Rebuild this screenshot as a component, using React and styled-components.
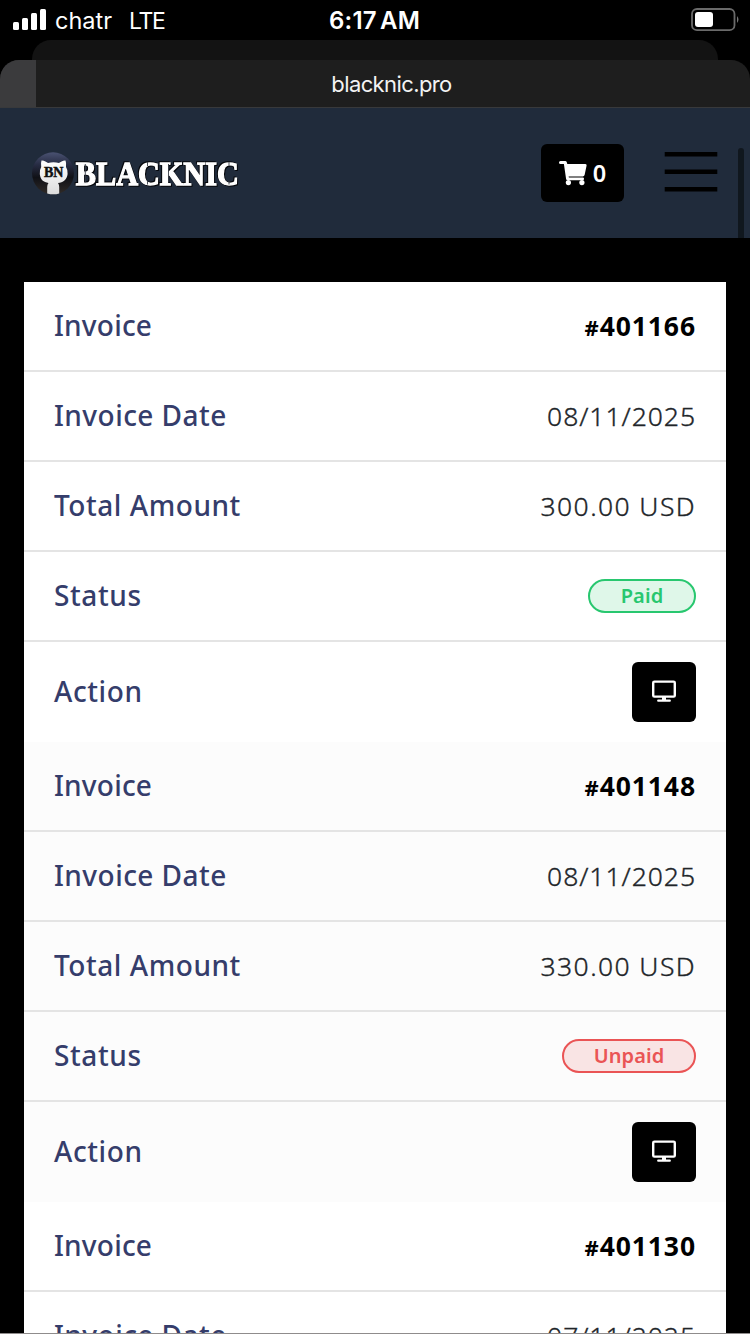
import React from "react";
import styled, { createGlobalStyle } from "styled-components";

const GlobalStyle = createGlobalStyle`
  html, body { margin: 0; background: #000; }
  * { box-sizing: border-box; }
`;

const Screen = styled.div`
  position: relative;
  width: 750px;
  height: 1334px;
  overflow: hidden;
  display: flex;
  flex-direction: column;
  background: #000;
  font-family: "Noto Sans", sans-serif;
`;

const StatusBar = styled.div`
  flex: none;
  height: 40px;
  display: grid;
  grid-template-columns: 1fr auto 1fr;
  grid-template-rows: 40px;
  align-items: center;
  padding: 0 10px 0 13px;
  color: #fff;
  font-family: Inter, sans-serif;
  line-height: 42px;
`;

const Carrier = styled.div`
  display: flex;
  align-items: center;
  font-size: 23.5px;
  padding-top: 2px;
`;

const Network = styled.span`
  margin-left: 17px;
  font-size: 23px;
  letter-spacing: -1.4px;
`;

const Signal = styled.svg`
  margin: -2px 8px 0 0;
`;

const Clock = styled.div`
  padding: 1px 4px 0 0;
  font-size: 24px;
  font-weight: 600;
  letter-spacing: 0.2px;
  word-spacing: -3px;
`;

const Battery = styled.svg`
  justify-self: end;
`;

const BackTab = styled.div`
  flex: none;
  height: 20px;
  margin: 0 32px;
  border-radius: 19px 19px 0 0;
  background: #131313;
`;

const AddressBar = styled.div`
  flex: none;
  height: 48px;
  display: flex;
  border-radius: 19px 19px 0 0;
  overflow: hidden;
  background: #1e1e1e;
  border-bottom: 1px solid #38393b;
`;

const TabEdge = styled.div`
  width: 36px;
  background: #3b3b3d;
`;

const Address = styled.div`
  flex: 1;
  text-align: center;
  color: #f3f3f3;
  font: 22px/48px Inter, sans-serif;
  letter-spacing: -0.6px;
  padding-right: 3px;
`;

const Header = styled.header`
  position: relative;
  flex: none;
  height: 130px;
  display: flex;
  align-items: center;
  padding: 0 32px;
  background: #202b3b;
`;

const Logo = styled.svg`
  margin-right: auto;
`;

const Wordmark = styled.g`
  font: 700 34.5px "Liberation Serif", serif;
  fill: #fff;
  stroke: #fff;
  stroke-width: 1.3px;
  filter: drop-shadow(1px 1px 0 #06080c) drop-shadow(-1px -1px 0 #06080c);
`;

const CartButton = styled.button`
  width: 83px;
  height: 58px;
  display: flex;
  align-items: center;
  justify-content: center;
  gap: 6px;
  border: 0;
  border-radius: 6px;
  padding: 0;
  background: #000;
  color: #fff;
  font: 600 23.5px/40px "Noto Sans", sans-serif;
`;

const MenuIcon = styled.svg`
  margin: 0 0 2px 40px;
`;

const ScrollThumb = styled.div`
  position: absolute;
  right: 6px;
  top: 40px;
  bottom: 0;
  width: 6px;
  border-radius: 3px 3px 0 0;
  background: #10171e;
`;

const InvoiceList = styled.main`
  flex: none;
  margin: 44px 24px 0;
`;

const InvoiceCard = styled.section`
  background: ${(p) => (p.$striped ? "#fcfcfc" : "#fff")};
`;

const Row = styled.div`
  height: ${(p) => (p.$last ? "100px" : "90px")};
  display: flex;
  align-items: center;
  justify-content: space-between;
  padding: 0 30px;
  border-bottom: ${(p) => (p.$last ? "0" : "2px solid #e4e4e4")};
`;

const Label = styled.span`
  color: #353d6b;
  font-size: 28px;
  font-weight: 500;
  line-height: 40px;
  padding-bottom: 2px;
  letter-spacing: ${(p) => p.$spacing || "0.5px"};
`;

const Value = styled.span`
  color: #212529;
  font-size: 26.5px;
  font-weight: 300;
  line-height: 40px;
  letter-spacing: ${(p) => p.$spacing || "0.95px"};
  -webkit-text-stroke: 0.35px currentColor;
`;

const Number = styled(Value)`
  color: #000;
  font-weight: 700;
  letter-spacing: 0.9px;
  -webkit-text-stroke: 0;
`;

const Hash = styled.span`
  font-size: 22px;
`;

const Badge = styled.span`
  width: ${(p) => (p.$paid ? "108px" : "134px")};
  height: 34px;
  border: 2px solid ${(p) => (p.$paid ? "#28c76f" : "#ea5455")};
  border-radius: 17px;
  background: ${(p) => (p.$paid ? "#dff7e9" : "#f9e4e4")};
  color: ${(p) => (p.$paid ? "#28c76f" : "#ea5455")};
  font-size: 20px;
  font-weight: 600;
  line-height: 29px;
  letter-spacing: 0.1px;
  text-align: center;
`;

const ViewButton = styled.button`
  width: 64px;
  height: 60px;
  display: grid;
  place-items: center;
  padding: 0 0 2px;
  border: 0;
  border-radius: 6px;
  background: #000;
`;

const BottomLine = styled.div`
  position: absolute;
  left: 0;
  right: 0;
  bottom: 0;
  height: 1px;
  background: #8f8c8c;
`;

const MonitorIcon = () => (
  <svg width="24" height="22" viewBox="0 0 24 22" fill="none" stroke="#fff">
    <rect x="1.2" y="1.6" width="21.6" height="15" rx="1.2" strokeWidth="2.4" />
    <path d="M12 16.5v4" strokeWidth="4" />
    <path d="M6.2 20.7h11.6" strokeWidth="2.2" strokeLinecap="round" />
  </svg>
);

const CartIcon = () => (
  <svg width="28" height="25" viewBox="0 0 28 25" fill="#fff">
    <path d="M1.5 0H6.2Q7.4 0 7.8 1.2L8.3 3H26.4Q27.9 3 27.6 4.5L25.6 14Q25.2 15.4 23.8 15.4H9.6L9.9 16.5H24.3Q25.2 17 25 18Q24.8 19.2 23.8 19.3H8.6Q7.4 19.2 7.1 18L4.9 3H1.5A1.5 1.5 0 0 1 1.5 0Z" />
    <circle cx="9.4" cy="21.6" r="2.6" />
    <circle cx="22.9" cy="21.6" r="2.6" />
  </svg>
);

const BrandLogo = () => (
  <Logo width="212" height="46" viewBox="0 0 212 46">
    <defs>
      <linearGradient id="disc" x1="0" y1="0" x2="0" y2="1">
        <stop offset="0" stopColor="#4a5272" />
        <stop offset="0.3" stopColor="#262b42" />
        <stop offset="0.6" stopColor="#101116" />
        <stop offset="1" stopColor="#302b28" />
      </linearGradient>
      <linearGradient id="cat" x1="0" y1="0" x2="0" y2="1">
        <stop offset="0" stopColor="#fff" />
        <stop offset="1" stopColor="#dcdcdc" />
      </linearGradient>
    </defs>
    <circle cx="21" cy="23.3" r="21" fill="url(#disc)" />
    <path
      d="M9.5 10.5 C12 10.2 14.5 12 16 13 Q21.5 11.7 27 13 C28.5 12 31 10.2 33.5 10.5 Q34.5 13 34 17 Q36 20 35.6 24 C35 30 31 32.3 26 33 Q27.2 34.5 27.2 37 V43.5 Q21.5 45.2 15.2 43.5 V37 Q15.2 34.5 16.5 33 C11.5 32 8.4 30 7.8 24 Q7.4 20 9.2 17 Q8.6 13 9.5 10.5Z"
      fill="url(#cat)"
    />
    <text x="12" y="27.4" textLength="19.5" lengthAdjust="spacingAndGlyphs" fontFamily="Liberation Serif, serif" fontSize="14.5" fontWeight="700" fill="#111" stroke="#111" strokeWidth="0.5">BN</text>
    <Wordmark>
      <text x="43.8" y="34.6" textLength="163" lengthAdjust="spacingAndGlyphs">BLACKNIC</text>
    </Wordmark>
    <path d="M53.3 14v18.5M115.5 12v4M115.5 31v3.5M136.5 14v18.5M197 12v4M197 31v3.5" stroke="#3a3f48" strokeWidth="0.9" />
  </Logo>
);

const invoices = [
  { id: "401166", date: "08/11/2025", amount: "300.00 USD", paid: true },
  { id: "401148", date: "08/11/2025", amount: "330.00 USD", paid: false },
  { id: "401130", date: "07/11/2025", amount: "300.00 USD", paid: true },
];

const Invoice = ({ invoice, striped }) => (
  <InvoiceCard $striped={striped}>
    <Row><Label $spacing="0.2px">Invoice</Label><Number><Hash>#</Hash>{invoice.id}</Number></Row>
    <Row><Label $spacing="0.45px">Invoice Date</Label><Value>{invoice.date}</Value></Row>
    <Row><Label $spacing="0.55px">Total Amount</Label><Value $spacing="1.4px">{invoice.amount}</Value></Row>
    <Row>
      <Label $spacing="0.6px">Status</Label>
      <Badge $paid={invoice.paid}>{invoice.paid ? "Paid" : "Unpaid"}</Badge>
    </Row>
    <Row $last>
      <Label $spacing="0.6px">Action</Label>
      <ViewButton aria-label="View invoice"><MonitorIcon /></ViewButton>
    </Row>
  </InvoiceCard>
);

export default function App() {
  return (
    <Screen>
      <GlobalStyle />
      <StatusBar>
        <Carrier>
          <Signal width="34" height="22" viewBox="0 0 34 22" fill="#fff">
            <rect x="0" y="13" width="6" height="8" rx="1.5" />
            <rect x="9" y="9" width="6" height="12" rx="1.5" />
            <rect x="18" y="4" width="6" height="17" rx="1.5" />
            <rect x="27" y="0" width="6" height="21" rx="1.5" />
          </Signal>
          chatr
          <Network>LTE</Network>
        </Carrier>
        <Clock>6:17 AM</Clock>
        <Battery width="49" height="24" viewBox="0 0 49 24" fill="none">
          <rect x="1" y="1" width="42.5" height="21.2" rx="5" stroke="#6a6a6a" strokeWidth="1.8" />
          <rect x="4" y="4" width="18" height="15" rx="3" fill="#fff" />
          <path d="M46 8q3 3.5 0 7z" fill="#777" />
        </Battery>
      </StatusBar>
      <BackTab />
      <AddressBar>
        <TabEdge />
        <Address>blacknic.pro</Address>
      </AddressBar>
      <Header>
        <BrandLogo />
        <CartButton><CartIcon /><span>0</span></CartButton>
        <MenuIcon width="54" height="40" viewBox="0 0 54 40" stroke="#000" strokeWidth="4.4">
          <path d="M.7 2.2h52.6M.7 19.8h52.6M.7 37.3h52.6" />
        </MenuIcon>
        <ScrollThumb />
      </Header>
      <InvoiceList>
        {invoices.map((invoice, i) => (
          <Invoice key={invoice.id} invoice={invoice} striped={i % 2 === 1} />
        ))}
      </InvoiceList>
      <BottomLine />
    </Screen>
  );
}
